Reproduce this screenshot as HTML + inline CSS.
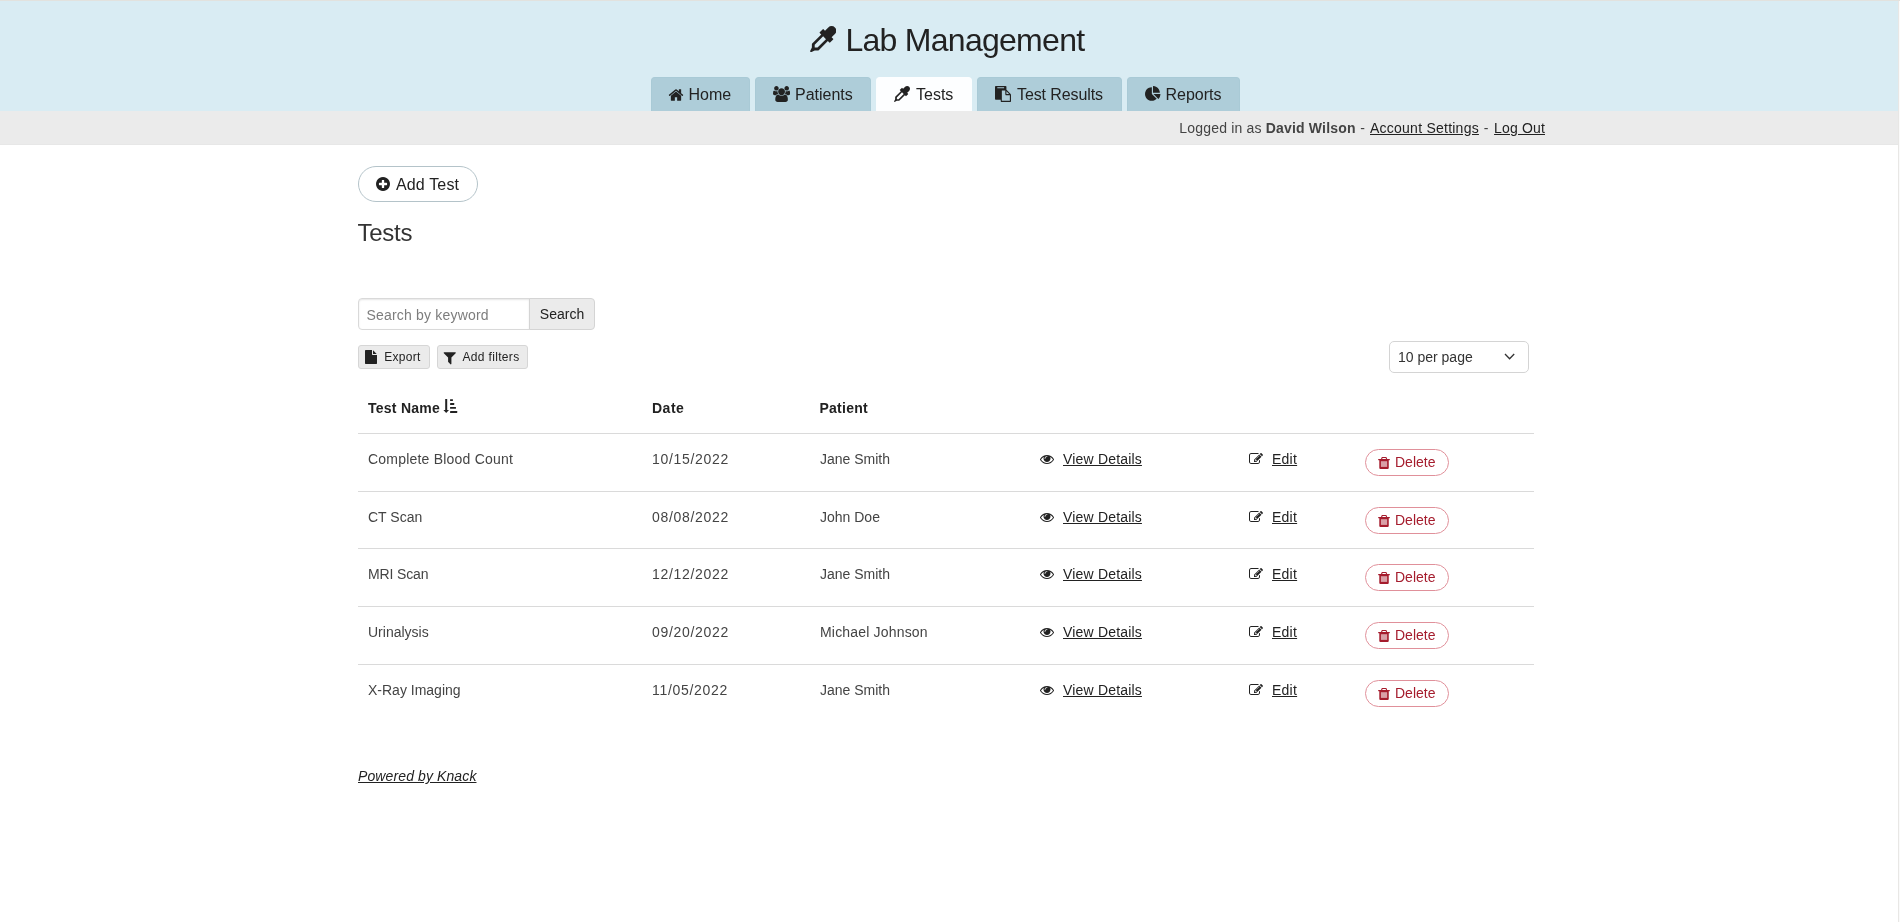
<!DOCTYPE html>
<html lang="en">
<head>
<meta charset="utf-8">
<title>Lab Management - Tests</title>
<style>
*{box-sizing:border-box;margin:0;padding:0}
html,body{width:1900px;height:922px;overflow:hidden;background:#fff}
body{font-family:"Liberation Sans",sans-serif;color:#333;font-size:14px;position:relative;background:transparent;will-change:transform}
a{color:#222;text-decoration:underline}
svg{display:block}
#frame-top{position:absolute;left:0;top:0;width:1900px;height:1px;background:#e2e2de;z-index:6}
#frame-r1{position:absolute;left:1898px;top:0;width:1px;height:922px;background:#e8e7e5;z-index:5}
#frame-r2{position:absolute;left:1899px;top:0;width:1px;height:922px;background:#fafafa;z-index:5}
#header{position:absolute;left:0;top:0;width:1898px;height:111px;background:#d9ecf3}
#title{position:absolute;left:0;top:22px;width:1898px;height:36px;white-space:nowrap}
#title h1{position:absolute;left:809.800px;top:-0.500px;font-weight:400;font-size:32px;letter-spacing:-0.720px;line-height:36px;color:#222;padding-left:35.600px}
#title h1 svg{position:absolute;left:0;top:4.100px}
#nav{position:absolute;left:0;top:77px;height:34px;width:1898px}
#nav a{position:absolute;top:0;height:34px;background:#aecdd9;border:1px solid #a9cad6;border-bottom:none;border-radius:4px 4px 0 0;color:#222;text-decoration:none;font-size:16px;line-height:34px;white-space:nowrap}
#nav a.active{background:#fdfeff;border-color:#fdfeff}
#nav a svg{position:absolute;top:8px}
#nav a span{position:absolute;top:0}
#userbar{position:absolute;left:0;top:111px;width:1898px;height:34px;background:#ebebeb;border-bottom:1px solid #e7e7e7;font-size:14px;line-height:34px;color:#444}
#userbar p{position:absolute;right:353px;top:0;white-space:nowrap}
#userbar b{color:#444;letter-spacing:0.180px}
#userbar .u1{letter-spacing:0.180px}
#userbar .u2{letter-spacing:0.630px}
#userbar .u5{letter-spacing:0.900px}
#userbar .u3{letter-spacing:0.240px}
#userbar .u4{letter-spacing:0.160px}
#userbar a{color:#222}
#content{position:absolute;left:358px;top:144px;width:1176px}

.btn-add{position:absolute;left:0;top:22px;width:120px;height:36px;border:1px solid #b4c3c9;border-radius:18px;background:#fff;color:#222;text-decoration:none;font-size:16px;line-height:34px;white-space:nowrap}
.btn-add svg{position:absolute;left:17.400px;top:10px}
.btn-add span{position:absolute;left:37px;top:1px;letter-spacing:0.150px}
h2.view-title{position:absolute;left:-0.500px;top:74px;font-weight:400;font-size:24px;line-height:30px;color:#333;white-space:nowrap;letter-spacing:-0.250px}
.search{position:absolute;left:0;top:154px;height:32px;width:237px}
.search .inp{position:absolute;left:0;top:0;width:172px;height:32px;border:1px solid #d9d9d9;border-radius:4px 0 0 4px;background:#fff;box-shadow:inset 0 1px 2px rgba(10,10,10,.1);color:#7d7d7d;font-size:14px;line-height:32px;padding-left:7.400px;letter-spacing:0.200px;white-space:nowrap}
.search .go{position:absolute;left:171px;top:0;width:66px;height:32px;border:1px solid #d4d4d4;border-radius:0 4px 4px 0;background:#ebebeb;color:#222;font-size:14px;line-height:30px;text-align:center;text-decoration:none}
.sbtn{position:absolute;top:201px;height:24px;border:1px solid #d6d6d6;border-radius:3px;background:#ebebeb;color:#222;font-size:12px;line-height:22px;text-decoration:none;white-space:nowrap}
.sbtn svg{position:absolute}
.sbtn span{position:absolute;top:0}
.perpage{position:absolute;left:1031px;top:197px;width:140px;height:32px;border:1px solid #d4d4d4;border-radius:5px;background:#fff;color:#333;font-size:14px;line-height:30px;padding-left:8px;white-space:nowrap}
.perpage svg{position:absolute;left:114px;top:11px}
table.tbl{position:absolute;left:0;top:237px;width:1176px;border-collapse:separate;border-spacing:0;table-layout:fixed;font-size:14px;color:#444}
table.tbl th{height:53px;text-align:left;font-weight:700;color:#222;padding:0 0 0 10px;border-bottom:1px solid #dadada;vertical-align:top;white-space:nowrap}
table.tbl th div{position:relative;top:19px;line-height:16px;height:16px}
table.tbl td{padding:0 0 0 10px;vertical-align:top;white-space:nowrap;border-bottom:1px solid #dadada}
table.tbl tr:last-child td{border-bottom:none}
table.tbl td > div{position:relative;height:0}
table.tbl tr.h58 td{height:58px}
table.tbl tr.h57 td{height:57px}
table.tbl th svg.sort{position:absolute;left:75px;top:-1px}
table.tbl td .t{position:absolute;left:0;top:17px;line-height:16px}
table.tbl td .dt{letter-spacing:0.700px}
.lnk svg{position:absolute;left:0}
.lnk a{position:absolute;top:17px;line-height:16px}
.lnk a.vd{letter-spacing:0.180px}
.lnk a.ed{letter-spacing:0.250px}
.del{position:absolute;left:0;top:15px;width:84px;height:27px;border:1px solid #e0909a;border-radius:14px;color:#a51c2d;font-size:14px;line-height:25px;text-decoration:none}
.del svg{position:absolute;left:11px;top:6px}
.del span{position:absolute;left:29px;top:0}
#footer{position:absolute;left:358px;top:768px;font-size:14px;line-height:16px;font-style:italic;white-space:nowrap;letter-spacing:0.110px}
</style>
</head>
<body>
<div id="header">
  <div id="title"><h1><svg width="26.300" height="26.300" viewBox="0 0 1792 1792"><path fill="#222" d="M1698 94q94 94 94 226.500t-94 225.500l-225 223 104 104q10 10 10 23t-10 23l-210 210q-10 10-23 10t-23-10l-105-105-603 603q-37 37-90 37h-203l-256 128-64-64 128-256v-203q0-53 37-90l603-603-105-105q-10-10-10-23t10-23l210-210q10-10 23-10t23 10l104 104 223-225q93-94 225.500-94t226.500 94zm-1186 1378l576-576-192-192-576 576v192h192z"/></svg>Lab Management</h1></div>
  <div id="nav">
    <a style="left:651px;width:99px"><svg width="16" height="16" viewBox="0 0 1792 1792" style="left:16px;top:8.500px"><path fill="#222" d="M1472 992v480q0 26-19 45t-45 19h-384v-384h-256v384h-384q-26 0-45-19t-19-45v-480q0-1 .5-3t.5-3l575-474 575 474q1 2 1 6zm223-69l-62 74q-8 9-21 11h-3q-13 0-21-7l-692-577-692 577q-12 8-24 7-13-2-21-11l-62-74q-8-10-7-23.500t11-21.500l719-599q32-26 76-26t76 26l244 204v-195q0-14 9-23t23-9h192q14 0 23 9t9 23v408l219 182q10 8 11 21.500t-7 23.500z"/></svg><span style="left:36.500px">Home</span></a>
    <a style="left:755px;width:116px"><svg width="17.140" height="16" viewBox="0 0 1920 1792" style="left:17px"><path fill="#222" d="M593 896q-162 5-265 128h-134q-82 0-138-40.500t-56-118.500q0-353 124-353 6 0 43.500 21t97.500 42.500 119 21.500q67 0 133-23-5 37-5 66 0 139 81 256zm1071 637q0 120-73 189.500t-194 69.500h-874q-121 0-194-69.500t-73-189.500q0-53 3.500-103.500t14-109 26.500-108.500 43-97.500 62-81 85.500-53.500 111.500-20q10 0 43 21.500t73 48 107 48 135 21.500 135-21.500 107-48 73-48 43-21.500q61 0 111.500 20t85.500 53.500 62 81 43 97.500 26.500 108.500 14 109 3.500 103.500zm-1024-1277q0 106-75 181t-181 75-181-75-75-181 75-181 181-75 181 75 75 181zm704 384q0 159-112.500 271.500t-271.500 112.500-271.500-112.500-112.500-271.500 112.500-271.500 271.500-112.500 271.500 112.500 112.500 271.500zm576 225q0 78-56 118.500t-138 40.500h-134q-103-123-265-128 81-117 81-256 0-29-5-66 66 23 133 23 59 0 119-21.500t97.500-42.500 43.500-21q124 0 124 353zm-128-609q0 106-75 181t-181 75-181-75-75-181 75-181 181-75 181 75 75 181z"/></svg><span style="left:39px">Patients</span></a>
    <a class="active" style="left:876px;width:96px"><svg width="16" height="16" viewBox="0 0 1792 1792" style="left:17px"><path fill="#222" d="M1698 94q94 94 94 226.500t-94 225.500l-225 223 104 104q10 10 10 23t-10 23l-210 210q-10 10-23 10t-23-10l-105-105-603 603q-37 37-90 37h-203l-256 128-64-64 128-256v-203q0-53 37-90l603-603-105-105q-10-10-10-23t10-23l210-210q10-10 23-10t23 10l104 104 223-225q93-94 225.500-94t226.500 94zm-1186 1378l576-576-192-192-576 576v192h192z"/></svg><span style="left:39px">Tests</span></a>
    <a style="left:977px;width:145px"><svg width="16" height="16" viewBox="0 0 1792 1792" style="left:17px"><path fill="#222" d="M768 1664h896v-640h-416q-40 0-68-28t-28-68v-416h-384v1152zm256-1440v-64q0-13-9.500-22.500t-22.500-9.500h-704q-13 0-22.500 9.500t-9.500 22.500v64q0 13 9.500 22.500t22.500 9.500h704q13 0 22.500-9.500t9.500-22.500zm256 672h299l-299-299v299zm512 128v672q0 40-28 68t-68 28h-960q-40 0-68-28t-28-68v-160h-544q-40 0-68-28t-28-68v-1344q0-40 28-68t68-28h1088q40 0 68 28t28 68v328q21 13 36 28l408 408q28 28 48 76t20 88z"/></svg><span style="left:39px;letter-spacing:-0.100px">Test Results</span></a>
    <a style="left:1127px;width:113px"><svg width="16" height="16" viewBox="0 0 1792 1792" style="left:16.700px"><path fill="#222" d="M768 890l546 546q-106 108-247.500 168t-298.500 60q-209 0-385.500-103t-279.500-279.500-103-385.500 103-385.500 279.500-279.500 385.500-103v762zm187 6h773q0 157-60 298.500t-168 247.500zm709-128h-768v-768q209 0 385.500 103t279.500 279.500 103 385.500z"/></svg><span style="left:37.500px">Reports</span></a>
  </div>
</div>
<div id="userbar"><p><span class="u1">Logged in as </span><b>David Wilson</b><span class="u2"> - </span><a class="u3">Account Settings</a><span class="u5"> - </span><a class="u4">Log Out</a></p></div>
<div id="content">
  <a class="btn-add"><svg width="14" height="14" viewBox="128 128 1536 1536"><path fill="#222" d="M1344 960v-128q0-26-19-45t-45-19h-256v-256q0-26-19-45t-45-19h-128q-26 0-45 19t-19 45v256h-256q-26 0-45 19t-19 45v128q0 26 19 45t45 19h256v256q0 26 19 45t45 19h128q26 0 45-19t19-45v-256h256q26 0 45-19t19-45zm320-64q0 209-103 385.500t-279.500 279.500-385.500 103-385.500-103-279.500-279.500-103-385.500 103-385.500 279.500-279.500 385.500-103 385.500 103 279.500 279.500 103 385.500z"/></svg><span>Add Test</span></a>
  <h2 class="view-title">Tests</h2>
  <div class="search"><div class="inp">Search by keyword</div><a class="go">Search</a></div>
  <a class="sbtn" style="left:0;width:72px"><svg width="14" height="14" viewBox="0 0 1792 1792" style="left:5px;top:4px"><path fill="#222" d="M1152 512v-472q22 14 36 28l408 408q14 14 28 36h-472zm-128 32q0 40 28 68t68 28h544v1056q0 40-28 68t-68 28h-1344q-40 0-68-28t-28-68v-1600q0-40 28-68t68-28h800v544z"/></svg><span style="left:25.200px;letter-spacing:0.300px">Export</span></a>
  <a class="sbtn" style="left:79px;width:91px"><svg width="15.500" height="15.500" viewBox="0 0 1792 1792" style="left:3.900px;top:3.700px"><path fill="#222" d="M1595 295q17 41-14 70l-493 493v742q0 42-39 59-13 5-25 5-27 0-45-19l-256-256q-19-19-19-45v-486l-493-493q-31-29-14-70 17-39 59-39h1280q42 0 59 39z"/></svg><span style="left:24.500px;letter-spacing:0.330px">Add filters</span></a>
  <div class="perpage">10 per page<svg width="12" height="8" viewBox="0 0 12 8"><path d="M1 1l4.600 4.800L10.200 1" fill="none" stroke="#333" stroke-width="1.300"/></svg></div>
  <table class="tbl">
    <colgroup><col style="width:284px"><col style="width:168px"><col style="width:220px"><col style="width:209px"><col style="width:116px"><col style="width:179px"></colgroup>
    <thead><tr>
      <th><div><span style="letter-spacing:0.250px">Test Name</span><svg class="sort" width="15" height="14" viewBox="0 0 15 14"><path fill="#222" d="M2.200 .100h2v10.800h1.800L3.200 13.900.400 10.900h1.800z"/><rect fill="#222" x="7.050" y=".200" width="2.900" height="1.700" rx=".300"/><rect fill="#222" x="7.050" y="4.100" width="4.200" height="1.800" rx=".300"/><rect fill="#222" x="7.050" y="8.050" width="5.900" height="1.750" rx=".300"/><rect fill="#222" x="7.050" y="12.100" width="7.200" height="1.800" rx=".300"/></svg></div></th>
      <th><div style="letter-spacing:0.500px">Date</div></th>
      <th><div style="letter-spacing:0.250px;left:-0.500px">Patient</div></th>
      <th></th><th></th><th></th>
    </tr></thead>
    <tbody>
    <tr class="h58">
      <td><div><span class="t" style="letter-spacing:0.210px">Complete Blood Count</span></div></td>
      <td><div><span class="t dt">10/15/2022</span></div></td>
      <td><div><span class="t">Jane Smith</span></div></td>
      <td><div class="lnk"><svg width="14" height="14" viewBox="0 0 1792 1792" style="top:18px"><path fill="#222" d="M1664 960q-152-236-381-353 61 104 61 225 0 185-131.500 316.500t-316.500 131.500-316.500-131.500-131.500-316.500q0-121 61-225-229 117-381 353 133 205 333.500 326.500t434.500 121.500 434.500-121.500 333.500-326.500zm-720-384q0-20-14-34t-34-14q-125 0-214.500 89.500t-89.500 214.500q0 20 14 34t34 14 34-14 14-34q0-86 61-147t147-61q20 0 34-14t14-34zm848 384q0 34-20 69-140 230-376.500 368.500t-499.500 138.500-499.500-139-376.500-368q-20-35-20-69t20-69q140-229 376.500-368t499.500-139 499.500 139 376.500 368q20 35 20 69z"/></svg><a class="vd" style="left:23px">View Details</a></div></td>
      <td><div class="lnk"><svg width="14" height="14" viewBox="0 0 1792 1792" style="top:18px"><path fill="#222" d="M888 1184l116-116-152-152-116 116v56h96v96h56zm440-720q-16-16-33 1l-350 350q-17 17-1 33t33-1l350-350q17-17 1-33zm80 594v190q0 119-84.500 203.500t-203.500 84.500h-832q-119 0-203.500-84.500t-84.500-203.500v-832q0-119 84.500-203.500t203.500-84.500h832q63 0 117 25 15 7 18 23 3 17-9 29l-49 49q-14 14-32 8-23-6-45-6h-832q-66 0-113 47t-47 113v832q0 66 47 113t113 47h832q66 0 113-47t47-113v-126q0-13 9-22l64-64q15-15 35-7t20 29zm-96-738l288 288-672 672h-288v-288zm444 132l-92 92-288-288 92-92q28-28 68-28t68 28l152 152q28 28 28 68t-28 68z"/></svg><a class="ed" style="left:23px">Edit</a></div></td>
      <td><div><a class="del"><svg width="14" height="14" viewBox="0 0 14 14"><path fill="none" stroke="#a51c2d" stroke-width="1.100" d="M4.300 3.600l.900-2.100h3.800l.900 2.100"/><rect fill="#a51c2d" x="1.100" y="3" width="11.800" height="1.250" rx=".400"/><path fill="#a51c2d" d="M2.300 4h9.450v7.900q0 1.150-1.150 1.150H3.450q-1.150 0-1.150-1.150z"/><rect fill="#d9a0a7" x="3.900" y="5.200" width="6.250" height="5.700"/></svg><span>Delete</span></a></div></td>
    </tr>
    <tr class="h57">
      <td><div><span class="t">CT Scan</span></div></td>
      <td><div><span class="t dt">08/08/2022</span></div></td>
      <td><div><span class="t">John Doe</span></div></td>
      <td><div class="lnk"><svg width="14" height="14" viewBox="0 0 1792 1792" style="top:18px"><path fill="#222" d="M1664 960q-152-236-381-353 61 104 61 225 0 185-131.500 316.500t-316.500 131.500-316.500-131.500-131.500-316.500q0-121 61-225-229 117-381 353 133 205 333.500 326.500t434.500 121.500 434.500-121.500 333.500-326.500zm-720-384q0-20-14-34t-34-14q-125 0-214.500 89.500t-89.500 214.500q0 20 14 34t34 14 34-14 14-34q0-86 61-147t147-61q20 0 34-14t14-34zm848 384q0 34-20 69-140 230-376.500 368.500t-499.500 138.500-499.500-139-376.500-368q-20-35-20-69t20-69q140-229 376.500-368t499.500-139 499.500 139 376.500 368q20 35 20 69z"/></svg><a class="vd" style="left:23px">View Details</a></div></td>
      <td><div class="lnk"><svg width="14" height="14" viewBox="0 0 1792 1792" style="top:18px"><path fill="#222" d="M888 1184l116-116-152-152-116 116v56h96v96h56zm440-720q-16-16-33 1l-350 350q-17 17-1 33t33-1l350-350q17-17 1-33zm80 594v190q0 119-84.500 203.500t-203.500 84.500h-832q-119 0-203.500-84.500t-84.500-203.500v-832q0-119 84.500-203.500t203.500-84.500h832q63 0 117 25 15 7 18 23 3 17-9 29l-49 49q-14 14-32 8-23-6-45-6h-832q-66 0-113 47t-47 113v832q0 66 47 113t113 47h832q66 0 113-47t47-113v-126q0-13 9-22l64-64q15-15 35-7t20 29zm-96-738l288 288-672 672h-288v-288zm444 132l-92 92-288-288 92-92q28-28 68-28t68 28l152 152q28 28 28 68t-28 68z"/></svg><a class="ed" style="left:23px">Edit</a></div></td>
      <td><div><a class="del"><svg width="14" height="14" viewBox="0 0 14 14"><path fill="none" stroke="#a51c2d" stroke-width="1.100" d="M4.300 3.600l.900-2.100h3.800l.900 2.100"/><rect fill="#a51c2d" x="1.100" y="3" width="11.800" height="1.250" rx=".400"/><path fill="#a51c2d" d="M2.300 4h9.450v7.900q0 1.150-1.150 1.150H3.450q-1.150 0-1.150-1.150z"/><rect fill="#d9a0a7" x="3.900" y="5.200" width="6.250" height="5.700"/></svg><span>Delete</span></a></div></td>
    </tr>
    <tr class="h58">
      <td><div><span class="t" style="letter-spacing:-0.150px">MRI Scan</span></div></td>
      <td><div><span class="t dt">12/12/2022</span></div></td>
      <td><div><span class="t">Jane Smith</span></div></td>
      <td><div class="lnk"><svg width="14" height="14" viewBox="0 0 1792 1792" style="top:18px"><path fill="#222" d="M1664 960q-152-236-381-353 61 104 61 225 0 185-131.500 316.500t-316.500 131.500-316.500-131.500-131.500-316.500q0-121 61-225-229 117-381 353 133 205 333.500 326.500t434.500 121.500 434.500-121.500 333.500-326.500zm-720-384q0-20-14-34t-34-14q-125 0-214.500 89.500t-89.500 214.500q0 20 14 34t34 14 34-14 14-34q0-86 61-147t147-61q20 0 34-14t14-34zm848 384q0 34-20 69-140 230-376.500 368.500t-499.500 138.500-499.500-139-376.500-368q-20-35-20-69t20-69q140-229 376.500-368t499.500-139 499.500 139 376.500 368q20 35 20 69z"/></svg><a class="vd" style="left:23px">View Details</a></div></td>
      <td><div class="lnk"><svg width="14" height="14" viewBox="0 0 1792 1792" style="top:18px"><path fill="#222" d="M888 1184l116-116-152-152-116 116v56h96v96h56zm440-720q-16-16-33 1l-350 350q-17 17-1 33t33-1l350-350q17-17 1-33zm80 594v190q0 119-84.500 203.500t-203.500 84.500h-832q-119 0-203.500-84.500t-84.500-203.500v-832q0-119 84.500-203.500t203.500-84.500h832q63 0 117 25 15 7 18 23 3 17-9 29l-49 49q-14 14-32 8-23-6-45-6h-832q-66 0-113 47t-47 113v832q0 66 47 113t113 47h832q66 0 113-47t47-113v-126q0-13 9-22l64-64q15-15 35-7t20 29zm-96-738l288 288-672 672h-288v-288zm444 132l-92 92-288-288 92-92q28-28 68-28t68 28l152 152q28 28 28 68t-28 68z"/></svg><a class="ed" style="left:23px">Edit</a></div></td>
      <td><div><a class="del"><svg width="14" height="14" viewBox="0 0 14 14"><path fill="none" stroke="#a51c2d" stroke-width="1.100" d="M4.300 3.600l.900-2.100h3.800l.900 2.100"/><rect fill="#a51c2d" x="1.100" y="3" width="11.800" height="1.250" rx=".400"/><path fill="#a51c2d" d="M2.300 4h9.450v7.900q0 1.150-1.150 1.150H3.450q-1.150 0-1.150-1.150z"/><rect fill="#d9a0a7" x="3.900" y="5.200" width="6.250" height="5.700"/></svg><span>Delete</span></a></div></td>
    </tr>
    <tr class="h58">
      <td><div><span class="t">Urinalysis</span></div></td>
      <td><div><span class="t dt">09/20/2022</span></div></td>
      <td><div><span class="t" style="letter-spacing:0.180px">Michael Johnson</span></div></td>
      <td><div class="lnk"><svg width="14" height="14" viewBox="0 0 1792 1792" style="top:18px"><path fill="#222" d="M1664 960q-152-236-381-353 61 104 61 225 0 185-131.500 316.500t-316.500 131.500-316.500-131.500-131.500-316.500q0-121 61-225-229 117-381 353 133 205 333.500 326.500t434.500 121.500 434.500-121.500 333.500-326.500zm-720-384q0-20-14-34t-34-14q-125 0-214.500 89.500t-89.500 214.500q0 20 14 34t34 14 34-14 14-34q0-86 61-147t147-61q20 0 34-14t14-34zm848 384q0 34-20 69-140 230-376.500 368.500t-499.500 138.500-499.500-139-376.500-368q-20-35-20-69t20-69q140-229 376.500-368t499.500-139 499.500 139 376.500 368q20 35 20 69z"/></svg><a class="vd" style="left:23px">View Details</a></div></td>
      <td><div class="lnk"><svg width="14" height="14" viewBox="0 0 1792 1792" style="top:18px"><path fill="#222" d="M888 1184l116-116-152-152-116 116v56h96v96h56zm440-720q-16-16-33 1l-350 350q-17 17-1 33t33-1l350-350q17-17 1-33zm80 594v190q0 119-84.500 203.500t-203.500 84.500h-832q-119 0-203.500-84.500t-84.500-203.500v-832q0-119 84.500-203.500t203.500-84.500h832q63 0 117 25 15 7 18 23 3 17-9 29l-49 49q-14 14-32 8-23-6-45-6h-832q-66 0-113 47t-47 113v832q0 66 47 113t113 47h832q66 0 113-47t47-113v-126q0-13 9-22l64-64q15-15 35-7t20 29zm-96-738l288 288-672 672h-288v-288zm444 132l-92 92-288-288 92-92q28-28 68-28t68 28l152 152q28 28 28 68t-28 68z"/></svg><a class="ed" style="left:23px">Edit</a></div></td>
      <td><div><a class="del"><svg width="14" height="14" viewBox="0 0 14 14"><path fill="none" stroke="#a51c2d" stroke-width="1.100" d="M4.300 3.600l.900-2.100h3.800l.900 2.100"/><rect fill="#a51c2d" x="1.100" y="3" width="11.800" height="1.250" rx=".400"/><path fill="#a51c2d" d="M2.300 4h9.450v7.900q0 1.150-1.150 1.150H3.450q-1.150 0-1.150-1.150z"/><rect fill="#d9a0a7" x="3.900" y="5.200" width="6.250" height="5.700"/></svg><span>Delete</span></a></div></td>
    </tr>
    <tr class="h58">
      <td><div><span class="t">X-Ray Imaging</span></div></td>
      <td><div><span class="t dt">11/05/2022</span></div></td>
      <td><div><span class="t">Jane Smith</span></div></td>
      <td><div class="lnk"><svg width="14" height="14" viewBox="0 0 1792 1792" style="top:18px"><path fill="#222" d="M1664 960q-152-236-381-353 61 104 61 225 0 185-131.500 316.500t-316.500 131.500-316.500-131.500-131.500-316.500q0-121 61-225-229 117-381 353 133 205 333.500 326.500t434.500 121.500 434.500-121.500 333.500-326.500zm-720-384q0-20-14-34t-34-14q-125 0-214.500 89.500t-89.500 214.500q0 20 14 34t34 14 34-14 14-34q0-86 61-147t147-61q20 0 34-14t14-34zm848 384q0 34-20 69-140 230-376.500 368.500t-499.500 138.500-499.500-139-376.500-368q-20-35-20-69t20-69q140-229 376.500-368t499.500-139 499.500 139 376.500 368q20 35 20 69z"/></svg><a class="vd" style="left:23px">View Details</a></div></td>
      <td><div class="lnk"><svg width="14" height="14" viewBox="0 0 1792 1792" style="top:18px"><path fill="#222" d="M888 1184l116-116-152-152-116 116v56h96v96h56zm440-720q-16-16-33 1l-350 350q-17 17-1 33t33-1l350-350q17-17 1-33zm80 594v190q0 119-84.500 203.500t-203.500 84.500h-832q-119 0-203.500-84.500t-84.500-203.500v-832q0-119 84.500-203.500t203.500-84.500h832q63 0 117 25 15 7 18 23 3 17-9 29l-49 49q-14 14-32 8-23-6-45-6h-832q-66 0-113 47t-47 113v832q0 66 47 113t113 47h832q66 0 113-47t47-113v-126q0-13 9-22l64-64q15-15 35-7t20 29zm-96-738l288 288-672 672h-288v-288zm444 132l-92 92-288-288 92-92q28-28 68-28t68 28l152 152q28 28 28 68t-28 68z"/></svg><a class="ed" style="left:23px">Edit</a></div></td>
      <td><div><a class="del"><svg width="14" height="14" viewBox="0 0 14 14"><path fill="none" stroke="#a51c2d" stroke-width="1.100" d="M4.300 3.600l.900-2.100h3.800l.900 2.100"/><rect fill="#a51c2d" x="1.100" y="3" width="11.800" height="1.250" rx=".400"/><path fill="#a51c2d" d="M2.300 4h9.450v7.900q0 1.150-1.150 1.150H3.450q-1.150 0-1.150-1.150z"/><rect fill="#d9a0a7" x="3.900" y="5.200" width="6.250" height="5.700"/></svg><span>Delete</span></a></div></td>
    </tr>
    </tbody>
  </table>
</div>
<div id="footer"><a>Powered by Knack</a></div>
<div id="frame-top"></div><div id="frame-r1"></div><div id="frame-r2"></div>
</body>
</html>
